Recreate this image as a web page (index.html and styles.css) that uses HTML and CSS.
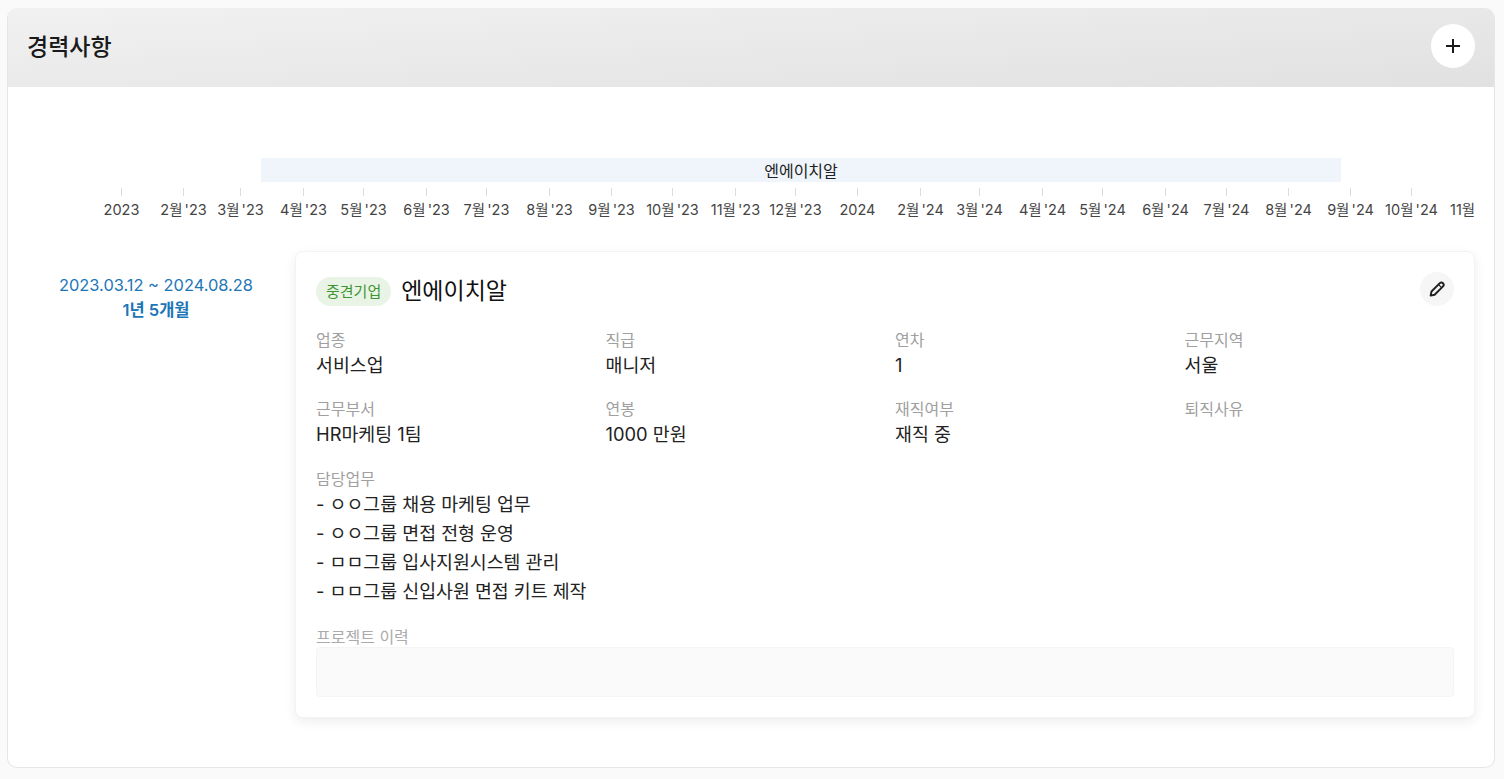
FILE: index.html
```html
<!DOCTYPE html>
<html lang="ko">
<head>
<meta charset="utf-8">
<title>경력사항</title>
<link rel="stylesheet" href="styles.css">
</head>
<body>
<section class="panel">
  <header class="panel-head">
    <h2 class="panel-title">경력사항</h2>
    <button class="add-btn" aria-label="추가">
      <svg width="18" height="18" viewBox="0 0 18 18"><path d="M9 2v14M2 9h14" stroke="#1a1a1a" stroke-width="2" fill="none"/></svg>
    </button>
  </header>
  <div class="panel-body">
    <div class="timeline">
      <div class="bar" style="left:254px;width:1080px">엔에이치알</div>
      <div class="tick" style="left:114px"><i></i><span>2023</span></div>
      <div class="tick" style="left:176px"><i></i><span>2월 '23</span></div>
      <div class="tick" style="left:233px"><i></i><span>3월 '23</span></div>
      <div class="tick" style="left:296px"><i></i><span>4월 '23</span></div>
      <div class="tick" style="left:356px"><i></i><span>5월 '23</span></div>
      <div class="tick" style="left:419px"><i></i><span>6월 '23</span></div>
      <div class="tick" style="left:479px"><i></i><span>7월 '23</span></div>
      <div class="tick" style="left:542px"><i></i><span>8월 '23</span></div>
      <div class="tick" style="left:604px"><i></i><span>9월 '23</span></div>
      <div class="tick" style="left:665px"><i></i><span>10월 '23</span></div>
      <div class="tick" style="left:728px"><i></i><span>11월 '23</span></div>
      <div class="tick" style="left:788px"><i></i><span>12월 '23</span></div>
      <div class="tick" style="left:850px"><i></i><span>2024</span></div>
      <div class="tick" style="left:913px"><i></i><span>2월 '24</span></div>
      <div class="tick" style="left:972px"><i></i><span>3월 '24</span></div>
      <div class="tick" style="left:1035px"><i></i><span>4월 '24</span></div>
      <div class="tick" style="left:1095px"><i></i><span>5월 '24</span></div>
      <div class="tick" style="left:1158px"><i></i><span>6월 '24</span></div>
      <div class="tick" style="left:1219px"><i></i><span>7월 '24</span></div>
      <div class="tick" style="left:1281px"><i></i><span>8월 '24</span></div>
      <div class="tick" style="left:1343px"><i></i><span>9월 '24</span></div>
      <div class="tick" style="left:1404px"><i></i><span>10월 '24</span></div>
      <div class="tick-end">11월</div>
    </div>
    <div class="entry">
      <div class="period">
        <div class="dates">2023.03.12 ~ 2024.08.28</div>
        <div class="duration">1년 5개월</div>
      </div>
      <article class="card">
        <div class="card-head">
          <span class="badge">중견기업</span>
          <h3 class="company">엔에이치알</h3>
          <button class="edit-btn" aria-label="수정">
            <svg width="18" height="18" viewBox="0 0 18 18" fill="none" stroke="#1f1f1f" stroke-linejoin="round" stroke-linecap="round"><path stroke-width="1.900" d="M3.500 11.500 11.800 3.200a2.300 2.300 0 0 1 3.200 0 2.300 2.300 0 0 1 0 3.200L6.600 14.700 2.600 15.600Z"/><path stroke-width="1.200" d="M10.600 4.600l3 3"/></svg>
          </button>
        </div>
        <div class="fields">
          <div class="field"><div class="label">업종</div><div class="value">서비스업</div></div>
          <div class="field"><div class="label">직급</div><div class="value">매니저</div></div>
          <div class="field"><div class="label">연차</div><div class="value">1</div></div>
          <div class="field"><div class="label">근무지역</div><div class="value">서울</div></div>
          <div class="field"><div class="label">근무부서</div><div class="value">HR마케팅 1팀</div></div>
          <div class="field"><div class="label">연봉</div><div class="value">1000 만원</div></div>
          <div class="field"><div class="label">재직여부</div><div class="value">재직 중</div></div>
          <div class="field"><div class="label">퇴직사유</div><div class="value"></div></div>
        </div>
        <div class="duties">
          <div class="label-tight">담당업무</div>
          <div class="duty">- ㅇㅇ그룹 채용 마케팅 업무</div>
          <div class="duty">- ㅇㅇ그룹 면접 전형 운영</div>
          <div class="duty">- ㅁㅁ그룹 입사지원시스템 관리</div>
          <div class="duty">- ㅁㅁ그룹 신입사원 면접 키트 제작</div>
        </div>
        <div class="projects">
          <div class="label-light">프로젝트 이력</div>
          <div class="project-box"></div>
        </div>
      </article>
    </div>
  </div>
</section>
</body>
</html>
```
FILE: styles.css
```css
* { box-sizing: border-box; }
html, body { height: 100%; }
body {
  margin: 0;
  padding: 8px 9px 11px 7px;
  background: #fafafa;
  font-family: Inter, "Noto Sans CJK KR", sans-serif;
  color: #1f1f1f;
  overflow: hidden;
}
.panel {
  height: 760px;
  background: #fff;
  border: 1px solid #e6e6e6;
  border-top: 0;
  border-radius: 10px;
  overflow: hidden;
}
.panel-head {
  height: 79px;
  margin: 0 -1px;
  padding: 0 20px 3px;
  display: flex;
  align-items: center;
  justify-content: space-between;
  background: linear-gradient(176deg, #f1f1f1 0%, #e1e1e1 100%);
}
.panel-title {
  margin: 0 0 2px;
  font-size: 23px;
  font-weight: 500;
  color: #1a1a1a;
}
.add-btn {
  width: 44px;
  height: 44px;
  border: 0;
  border-radius: 50%;
  background: #fff;
  display: flex;
  align-items: center;
  justify-content: center;
  padding: 0;
}
.panel-body { padding: 0 19px 0 0; }
.timeline {
  position: relative;
  height: 164px;
  overflow: hidden;
  margin: 0 -19px 0 -1px;
}
.bar {
  position: absolute;
  top: 71px;
  height: 24px;
  background: #f0f5fb;
  color: #222;
  font-size: 16px;
  line-height: 26px;
  text-align: center;
}
.tick {
  position: absolute;
  top: 101px;
  width: 0;
  display: flex;
  flex-direction: column;
  align-items: center;
}
.tick i {
  display: block;
  flex: none;
  width: 1px;
  height: 8px;
  background: #dcdcdc;
}
.tick span {
  margin-top: 4px;
  padding-left: 1px;
  font-size: 14.500px;
  line-height: 20px;
  word-spacing: -2px;
  color: #444;
  white-space: nowrap;
}
.tick-end {
  position: absolute;
  top: 113px;
  left: 1443px;
  font-size: 14.500px;
  line-height: 20px;
  color: #444;
  white-space: nowrap;
}
.entry {
  display: flex;
  align-items: flex-start;
}
.period {
  width: 287px;
  flex: none;
  padding: 22px 0 0 9px;
  text-align: center;
  color: #1c76b8;
}
.dates { font-size: 16.400px; line-height: 24px; }
.duration { font-size: 16.500px; line-height: 27px; font-weight: 600; }
.card {
  flex: 1;
  height: 467px;
  padding: 20px;
  background: #fff;
  border-radius: 8px;
  border: 1px solid #f3f3f3;
  box-shadow: 0 4px 12px rgba(0, 0, 0, 0.07);
}
.card-head {
  display: flex;
  align-items: center;
  height: 36px;
}
.badge {
  margin-top: 2px;
  height: 29px;
  padding: 0 10px;
  border-radius: 15px;
  background: #e9f4e6;
  color: #3e9432;
  font-size: 15px;
  line-height: 29px;
}
.company {
  margin: 0 0 2px 10px;
  font-size: 23px;
  font-weight: 400;
  color: #111;
}
.edit-btn {
  margin: 0 0 2px auto;
  width: 34px;
  height: 34px;
  border: 0;
  border-radius: 50%;
  background: #f6f6f6;
  display: flex;
  align-items: center;
  justify-content: center;
  padding: 0;
}
.fields {
  margin-top: 22px;
  display: grid;
  grid-template-columns: repeat(4, 1fr);
  column-gap: 20px;
  row-gap: 20px;
}
.field { min-height: 49px; }
.label {
  margin-bottom: 2px;
  font-size: 16px;
  line-height: 20px;
  color: #a0a0a0;
}
.value {
  font-size: 18.350px;
  line-height: 27px;
  color: #222;
}
.duties { margin-top: 21px; }
.label-tight {
  font-size: 16px;
  line-height: 21px;
  color: #a0a0a0;
}
.duty {
  font-size: 18.350px;
  line-height: 29px;
  color: #222;
}
.projects { margin-top: 21px; }
.label-light {
  height: 20px;
  font-size: 16px;
  line-height: 20px;
  color: #ababab;
}
.project-box {
  height: 50px;
  background: #fafafa;
  border: 1px solid #f4f4f4;
  border-radius: 4px;
}
```
